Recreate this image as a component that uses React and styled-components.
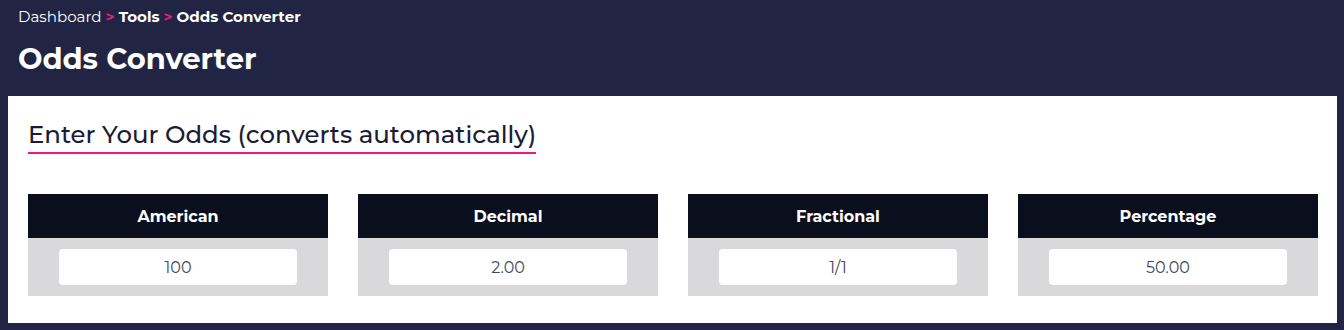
import React, { useState } from 'react';
import styled, { createGlobalStyle } from 'styled-components';

const GlobalStyle = createGlobalStyle`
    body {
        margin: 0;
        background: #212443;
        font-family: Montserrat, Inter, "Noto Sans", sans-serif;
    }
`;

const Page = styled.div`
    padding: 0 7px 7px 8px;
`;

const PageHeader = styled.header`
    padding: 6px 10px 0;
    color: #fff;
    height: 96px;
    box-sizing: border-box;
`;

const Breadcrumb = styled.nav`
    font-size: 15.1px;
    line-height: 22px;

    a {
        color: #fff;
        text-decoration: none;
    }
    strong {
        font-weight: 700;
    }
`;

const Sep = styled.span`
    color: #ec1a7d;
    font-weight: 700;
    margin: 0 4px;
`;

const Title = styled.h1`
    margin: 13px 0 0;
    font-size: 29px;
    line-height: 36px;
    font-weight: 700;
`;

const Card = styled.section`
    background: #fff;
    padding: 23px 19px 27px 20px;
`;

const SectionTitle = styled.h2`
    display: inline-block;
    margin: 0 0 40px;
    padding-bottom: 3px;
    font-size: 24.4px;
    line-height: 30px;
    font-weight: 500;
    color: #1a1c35;
    border-bottom: 2px solid #ec1a7d;
`;

const Grid = styled.div`
    display: grid;
    grid-template-columns: repeat(4, 1fr);
    gap: 30px;
`;

const Column = styled.div`
    background: #d9d9db;
`;

const ColumnHead = styled.div`
    height: 44px;
    display: flex;
    align-items: center;
    justify-content: center;
    background: #0b0e1c;
    color: #fff;
    font-weight: 700;
    font-size: 16px;
`;

const ColumnBody = styled.div`
    display: flex;
    justify-content: center;
    padding: 11px 0;
`;

const OddsInput = styled.input`
    width: 238px;
    height: 36px;
    box-sizing: border-box;
    border: 0;
    border-radius: 4px;
    background: #fff;
    text-align: center;
    font-family: inherit;
    font-size: 16px;
    color: #44465e;
    outline: none;
`;

const formats = [
    { key: 'american', label: 'American', value: '100' },
    { key: 'decimal', label: 'Decimal', value: '2.00' },
    { key: 'fractional', label: 'Fractional', value: '1/1' },
    { key: 'percentage', label: 'Percentage', value: '50.00' },
];

function App() {
    const [odds, setOdds] = useState(
        Object.fromEntries(formats.map(f => [f.key, f.value]))
    );

    const handleChange = (event) => {
        const { name, value } = event.target;
        setOdds(prev => ({ ...prev, [name]: value }));
    };

    return (
        <Page>
            <GlobalStyle />
            <PageHeader>
                <Breadcrumb>
                    <a href="#">Dashboard</a>
                    <Sep>&gt;</Sep>
                    <strong>Tools</strong>
                    <Sep>&gt;</Sep>
                    <strong>Odds Converter</strong>
                </Breadcrumb>
                <Title>Odds Converter</Title>
            </PageHeader>
            <Card>
                <SectionTitle>Enter Your Odds (converts automatically)</SectionTitle>
                <Grid>
                    {formats.map(f => (
                        <Column key={f.key}>
                            <ColumnHead>{f.label}</ColumnHead>
                            <ColumnBody>
                                <OddsInput
                                    name={f.key}
                                    value={odds[f.key]}
                                    onChange={handleChange}
                                />
                            </ColumnBody>
                        </Column>
                    ))}
                </Grid>
            </Card>
        </Page>
    );
}

export default App;
